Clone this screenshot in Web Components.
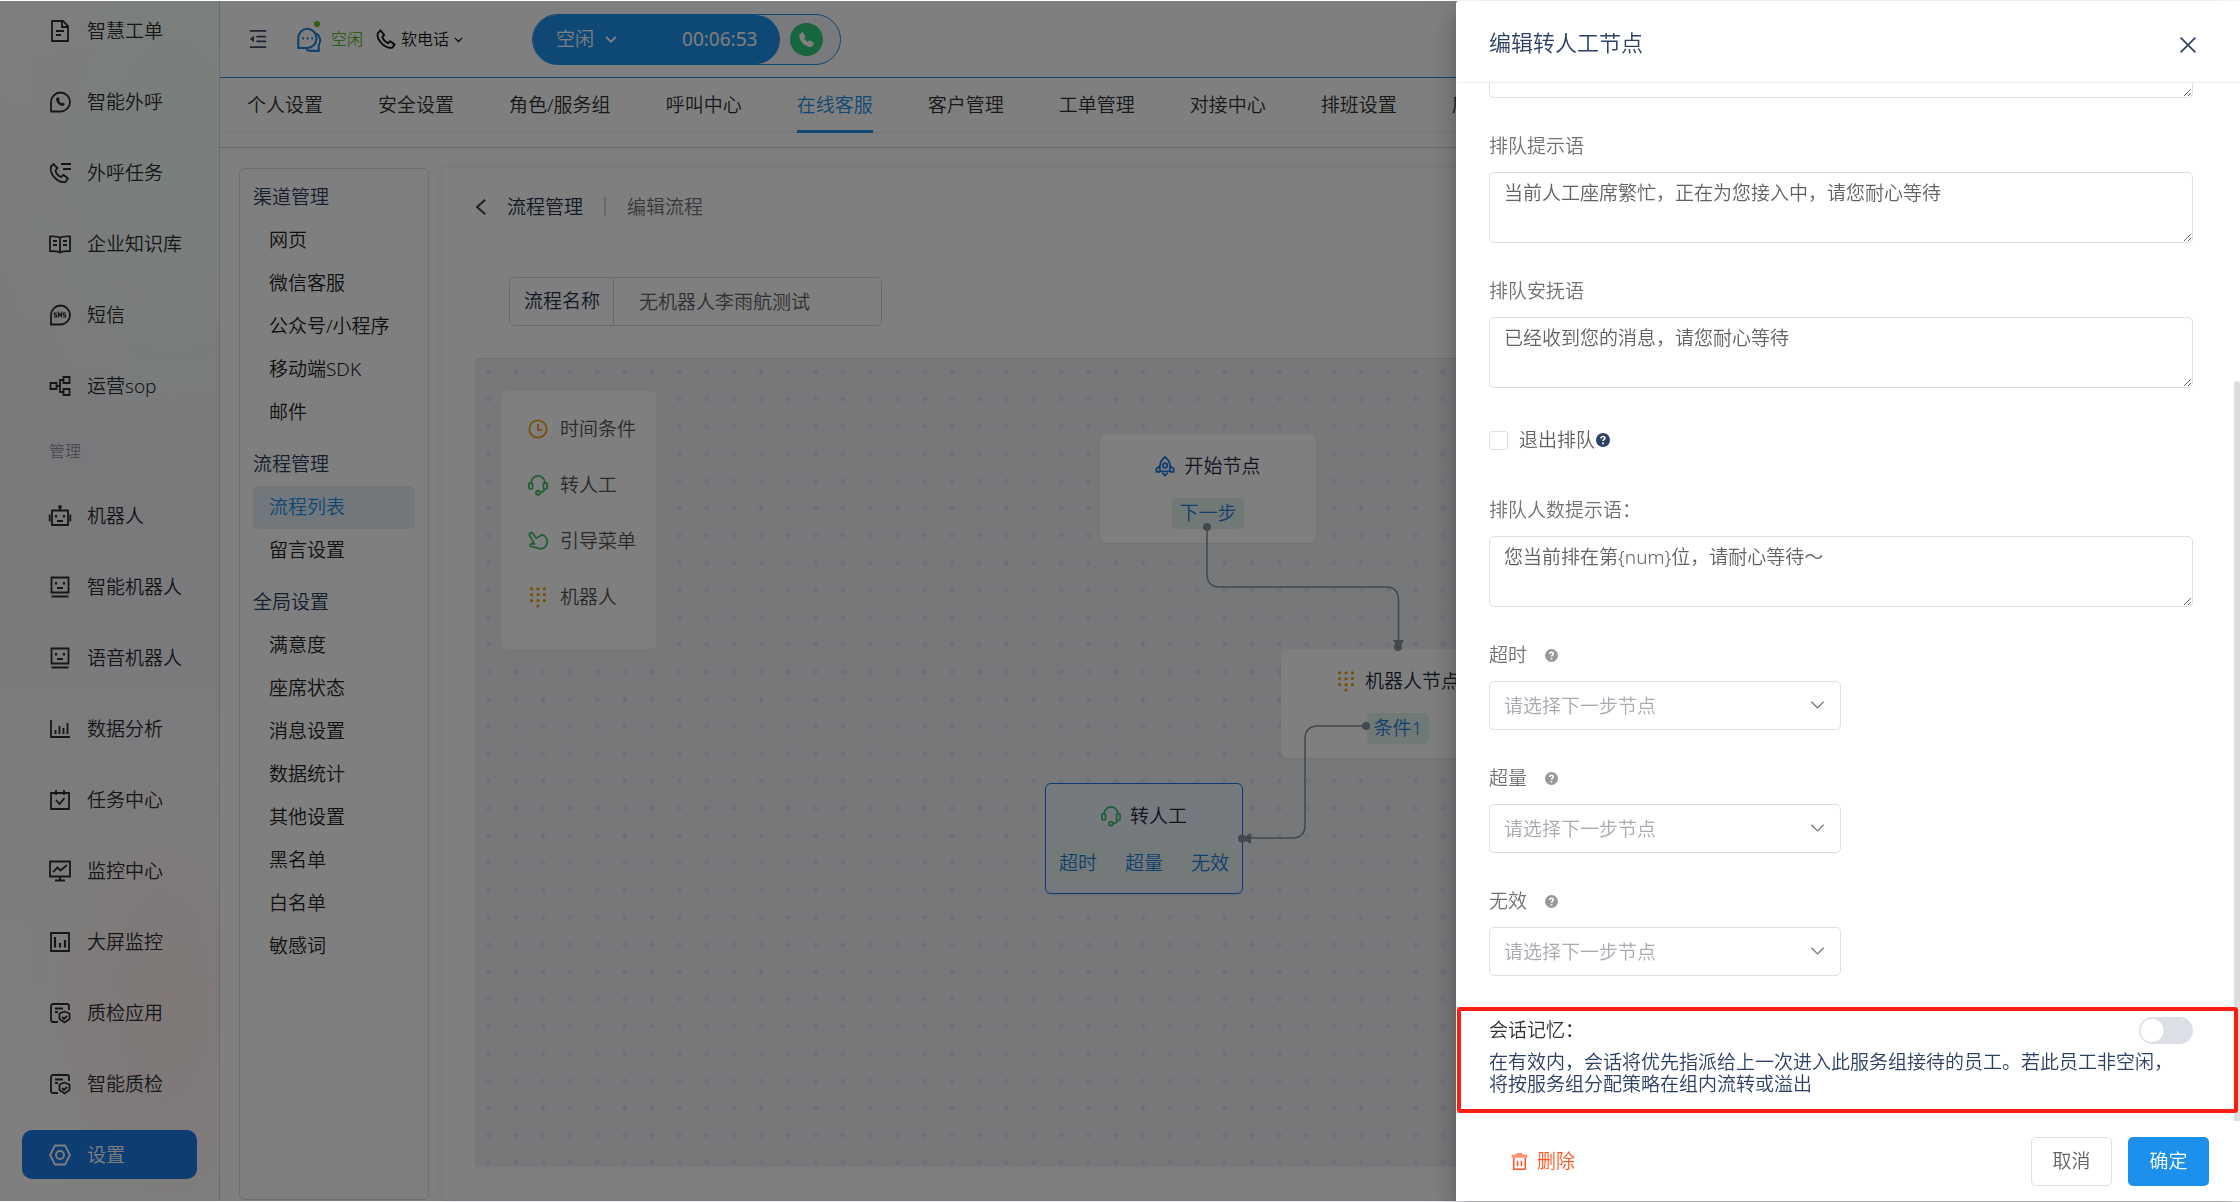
<!DOCTYPE html>
<html lang="zh-CN">
<head>
<meta charset="utf-8">
<meta name="viewport" content="width=device-width, initial-scale=1">
<title>流程管理</title>
<style>
  body {
    margin: 0;
    background: #fff;
    color: #303133;
    font: 350 19px/28px "Noto Sans", "Noto Sans CJK SC", sans-serif;
    overflow: hidden;
  }
</style>
</head>
<body>

<app-shell>
  <side-nav slot="side"></side-nav>
  <top-bar slot="top"></top-bar>
  <tab-bar slot="tabs"></tab-bar>
  <settings-menu slot="menu"></settings-menu>
  <flow-editor slot="main"></flow-editor>
</app-shell>

<edit-drawer heading="编辑转人工节点">
  <text-field></text-field>
  <text-field label="排队提示语" value="当前人工座席繁忙，正在为您接入中，请您耐心等待"></text-field>
  <text-field label="排队安抚语" value="已经收到您的消息，请您耐心等待"></text-field>
  <check-field label="退出排队"></check-field>
  <text-field label="排队人数提示语：" value="您当前排在第{num}位，请耐心等待～"></text-field>
  <select-field label="超时" placeholder="请选择下一步节点"></select-field>
  <select-field label="超量" placeholder="请选择下一步节点"></select-field>
  <select-field label="无效" placeholder="请选择下一步节点"></select-field>
  <memory-switch slot="note" label="会话记忆：">在有效内，会话将优先指派给上一次进入此服务组接待的员工。若此员工非空闲，将按服务组分配策略在组内流转或溢出</memory-switch>
</edit-drawer>

<script>
/* === ICONS === */

const ICONS = {
  doc: '<path d="M3 1h11l5 5v15H3zM13 1v6h6M7 11h8M7 15h5"/>',
  call: '<path d="M2 20.5V11a9.5 9.5 0 1 1 9.500 9.500z"/><path d="M7 7.500c0 4 3.500 7.500 7.500 7.500l1.500-2-2.500-1.500-1.200.8c-1-.5-1.800-1.400-2.300-2.500l.9-1L9.500 6z" fill="currentColor" stroke="none"/>',
  task: '<path d="M2 4.500 4.500 2 8.500 6 6.500 8.500c.5 3 3 5.500 5.500 6.500l2.500-2 4.500 3.500-2.500 3.500C10 21.500 0 13 2 4.500zM12 2h10M14 7h8"/>',
  book: '<path d="M11 5C9 3 5 3.500 1 3.500V18c4 0 8 0 10 1.500 2-1.500 6-1.500 10-1.500V3.500c-4 0-8-.5-10 1.500zM11 5v14M4 8h4M4 12h4M14 8h4M14 12h4"/>',
  sms: '<path d="M2 20.500V11a9.500 9.500 0 1 1 9.500 9.500z"/><path d="M8 9H5.500v2H7.500v2H5M9.500 13.500V9l1.500 2.500L12.500 9v4.500M17 9h-2.500v2h2v2H14" stroke-width="1.200"/>',
  sop: '<path d="M1.500 8h6v6h-6zM14.500 2h6v6h-6zM14.500 14h6v6h-6zM7.500 11H11M14.500 5H11v12h3.500"/>',
  bot: '<path d="M3 5.500h16V20H3zM11 5V1.500M.7 9.500v7M21.300 9.500v7M8 16h6"/><path d="M7 10v2.500M15 10v2.500" stroke-width="2.200"/><circle cx="11" cy="2" r="1" fill="currentColor"/>',
  face: '<path d="M2.500 1.500h17v15h-17zM2.500 20.500h17M8 12h6"/><path d="M7 6v2.500M15 6v2.500" stroke-width="2.200"/>',
  chart: '<path d="M2 2v17h19M6.500 12v4M10.500 8v8M14.500 10v6M18.500 5v11"/>',
  todo: '<path d="M2 4h18v16H2zM7 1v5M15 1v5M7 11l3.500 4 5-6"/>',
  monitor: '<path d="M1 1.500h20v15H1zM11 17v3.500M6 20.500h10M4 12l4.500-4.500 3 3L18 5"/>',
  screen: '<path d="M2 2h18v18H2z"/><path d="M6 6v10.500M11 12v4.500M16 9v7.500" stroke-width="2.200"/>',
  audit: '<path d="M9 20H4a2 2 0 0 1-2-2V4a2 2 0 0 1 2-2h14a2 2 0 0 1 2 2v4M6 6.500h8M6 10h3"/><path d="M15.500 9.500 20.500 11.500V17l-5 3.500-5-3.500v-5.500zM13 15l2 2 3-3"/>',
  gear: '<path d="M6 1.500h10L21 11l-5 9.500H6L1 11z"/><circle cx="11" cy="11" r="4"/>',
  fold: '<path d="M1 1h20M9 8h12M9 14h12M1 21h20" stroke-width="2.200"/><path d="M1 11 6 7v8z" fill="currentColor" stroke="none"/>',
  chat: '<path d="M2 18.500V9.500a8 8.500 0 1 1 8 9z"/><path d="M18 5.500c4 3 4 7.500 2 10.500v5h-7c-1.500 0-3-.5-4-1.500"/><path d="M5.500 10h1.500M9.500 10H11M13.500 10H15" stroke-width="2"/>',
  phone: '<path d="M2 4.500 5 1.500l4 5-2 2.500c1 2.500 3.500 5.500 6.500 6.500l2-2 5 3.500-2.500 3.500C10.500 22 0 12.500 2 4.500z"/>',
  phoneFill: '<path d="M2 4.500 5.500 1l4.500 6-2 2.500c1 2 2.500 3.500 4.500 4.500l2.500-2 6 4-3 4.500C10.500 22 0 12.500 2 4.500z" fill="currentColor" stroke="none"/>',
  down: '<path d="M2 7l9 9 9-9"/>',
  left: '<path d="M14 1 3 11l11 10"/>',
  close: '<path d="M2 2l18 18M20 2 2 20"/>',
  clock: '<circle cx="11" cy="11" r="9.500"/><path d="M11 5.500V12h5"/>',
  headset: '<path d="M3.500 9C3.500 4 7 1 11 1s7.500 3 7.500 8M18.500 15.500c-1 2.500-3 3.500-5.300 4"/><rect x="1" y="8.500" width="4" height="7" rx="2"/><rect x="17" y="8.500" width="4" height="7" rx="2"/><circle cx="11" cy="19.500" r="2.200"/>',
  hand: '<path d="M1.500 4.500C1 2 4 .8 5.500 3L9 8l6.500-4c4 1 6 5 5.500 9-.5 4-4 7-8 6.500l-10-2.500c-1.500-1-.5-3 1-3h3z"/>',
  keypad: '<path d="M4 2h.01M11 2h.01M18 2h.01M4 8.500h.01M11 8.500h.01M18 8.500h.01M4 15h.01M11 15h.01M18 15h.01M11 21h.01" stroke-width="3.600" stroke-linecap="round"/>',
  rocket: '<path d="M11 1C7 4 5.500 7.500 5.500 11v6h11v-6C16.500 7.500 15 4 11 1zM5.500 11 1.500 14v3.500h4M16.500 11l4 3v3.500h-4M8 18.500l3 3 3-3"/><circle cx="11" cy="10.500" r="2.500"/>',
  help: '<circle cx="11" cy="11" r="11" fill="currentColor" stroke="none"/><path d="M8 8.500c0-4 6-4 6-.3 0 2-3 2.300-3 4.500" stroke="#fff" stroke-width="2.600"/><path d="M11 15v2.600" stroke="#fff" stroke-width="2.800"/>',
  trash: '<path d="M1 4h20M7 2h8" stroke-width="4" stroke-opacity=".65"/><path d="M3.500 6v15h15V6M8.500 10v7M13.500 10v7"/>'
};

class UiIcon extends HTMLElement {
  connectedCallback() {
    const width = this.getAttribute("stroke") || "1.800";
    this.attachShadow({ mode: "open" }).innerHTML = `
      <style>
        :host { display: inline-flex; flex: none; width: 22px; height: 22px; }
        svg { width: 100%; height: 100%; overflow: visible; }
      </style>
      <svg viewBox="0 0 22 22" fill="none" stroke="currentColor" stroke-width="${width}" aria-hidden="true">${ICONS[this.getAttribute("name")]}</svg>
    `;
  }
}

/* === LAYOUT === */

class AppShell extends HTMLElement {
  constructor() {
    super();
    this.attachShadow({ mode: "open" }).innerHTML = `
      <style>
        :host {
          display: grid;
          grid-template-columns: 220px minmax(0, 1fr);
          box-sizing: border-box;
          height: 100vh;
          padding: 1px 0;
        }
        .page { display: flex; flex-direction: column; min-width: 0; min-height: 0; }
        .content {
          flex: 1;
          display: grid;
          grid-template-columns: 190px minmax(0, 1fr);
          gap: 14px;
          min-height: 0;
          padding: 20px 19px 1px;
          margin-top: 14px;
          border-top: 1px solid #d4d6da;
        }
      </style>
      <slot name="side"></slot>
      <div class="page">
        <slot name="top"></slot>
        <slot name="tabs"></slot>
        <div class="content">
          <slot name="menu"></slot>
          <slot name="main"></slot>
        </div>
      </div>
    `;
  }
}

class SideNav extends HTMLElement {
  constructor() {
    super();
    const link = ([icon, text, on]) => `<a href="#" class="${on ? "on" : ""}"><ui-icon name="${icon}"></ui-icon>${text}</a>`;
    const work = [["doc", "智慧工单"], ["call", "智能外呼"], ["task", "外呼任务"], ["book", "企业知识库"], ["sms", "短信"], ["sop", "运营sop"]];
    const manage = [["bot", "机器人"], ["face", "智能机器人"], ["face", "语音机器人"], ["chart", "数据分析"], ["todo", "任务中心"],
      ["monitor", "监控中心"], ["screen", "大屏监控"], ["audit", "质检应用"], ["audit", "智能质检"], ["gear", "设置", true]];

    this.attachShadow({ mode: "open" }).innerHTML = `
      <style>
        :host {
          display: block;
          box-sizing: border-box;
          padding: 5px 22px 0;
          overflow: hidden;
          border-right: 1px solid #d2d4da;
          background:
            radial-gradient(ellipse 190px 330px at 80% 12%, #f2fff7, transparent),
            radial-gradient(ellipse 150px 300px at 75% 84%, #fff1ef, transparent),
            linear-gradient(#fcfdfd, #f3f3f9 38%, #f7f8fd 62%, #fdfcfc 82%, #fff);
        }
        nav { display: flex; flex-direction: column; gap: 22px; }
        a {
          display: flex;
          align-items: center;
          gap: 16px;
          height: 49px;
          padding-left: 27px;
          border-radius: 10px;
          color: #2c2d30;
          text-decoration: none;
        }
        .on { background: #1c7be6; color: #fff; }
        h2 { margin: 28px 27px 27px; font-size: 16px; font-weight: inherit; line-height: 26px; color: #96979f; }
      </style>
      <nav>${work.map(link).join("")}</nav>
      <h2>管理</h2>
      <nav>${manage.map(link).join("")}</nav>
    `;
  }
}

class TopBar extends HTMLElement {
  constructor() {
    super();
    this.attachShadow({ mode: "open" }).innerHTML = `
      <style>
        :host {
          display: flex;
          align-items: center;
          height: 76px;
          padding: 0 28px;
          border-bottom: 1px solid #1c90ea;
          font-size: 16px;
        }
        button {
          display: flex;
          align-items: center;
          padding: 0;
          border: 0;
          background: none;
          color: inherit;
          font: inherit;
          cursor: pointer;
        }
        .fold { color: #3c4a66; }
        .fold ui-icon { width: 20px; height: 18px; }
        .chat { position: relative; gap: 10px; margin-left: 28px; color: #5fb62f; }
        .chat ui-icon { width: 25px; height: 25px; color: #1c80dc; }
        .chat::after {
          content: "";
          position: absolute;
          left: 18px;
          top: -4px;
          width: 6px;
          height: 6px;
          border-radius: 50%;
          background: #5fb62f;
        }
        .soft { gap: 5px; margin-left: 13px; color: #111; }
        .soft ui-icon { width: 20px; height: 20px; }
        .soft .arrow { width: 9px; height: 9px; }
        .status {
          display: flex;
          align-items: center;
          box-sizing: border-box;
          height: 51px;
          margin-left: 69px;
          padding-right: 17px;
          border: 1px solid #1c90ea;
          border-radius: 26px;
          background: #f0f5fd;
          font-size: 19px;
        }
        .state {
          gap: 11px;
          height: 49px;
          padding: 0 23px;
          border-radius: 25px;
          background: #1c90ea;
          color: #fff;
        }
        .state ui-icon { width: 12px; height: 12px; }
        time { margin-left: 54px; font-weight: 400; }
        .dial {
          justify-content: center;
          width: 33px;
          height: 33px;
          margin-left: 10px;
          border-radius: 50%;
          background: #2fcc7a;
          color: #fff;
        }
        .dial ui-icon { width: 17px; height: 17px; }
      </style>
      <button class="fold" aria-label="收起"><ui-icon name="fold"></ui-icon></button>
      <button class="chat"><ui-icon name="chat" stroke="1.800"></ui-icon>空闲</button>
      <button class="soft"><ui-icon name="phone" stroke="2"></ui-icon>软电话<ui-icon class="arrow" name="down" stroke="3"></ui-icon></button>
      <div class="status">
        <button class="state">空闲<ui-icon name="down" stroke="3.500"></ui-icon><time>00:06:53</time></button>
        <button class="dial" aria-label="拨号"><ui-icon name="phoneFill"></ui-icon></button>
      </div>
    `;
  }
}

class TabBar extends HTMLElement {
  constructor() {
    super();
    const tabs = ["个人设置", "安全设置", "角色/服务组", "呼叫中心", "在线客服", "客户管理", "工单管理", "对接中心", "排班设置", "质检"];
    this.attachShadow({ mode: "open" }).innerHTML = `
      <style>
        :host { display: block; padding: 0 27px; border-bottom: 1px solid #eceef2; }
        nav { display: flex; gap: 55px; height: 54px; }
        a { box-sizing: border-box; height: 55px; line-height: 55px; color: #303133; text-decoration: none; white-space: nowrap; }
        .on { color: #1c90ea; border-bottom: 3px solid #1c90ea; }
      </style>
      <nav>${tabs.map(t => `<a href="#" class="${t === "在线客服" ? "on" : ""}">${t}</a>`).join("")}</nav>
    `;
  }
}

class SettingsMenu extends HTMLElement {
  constructor() {
    super();
    const groups = {
      "渠道管理": ["网页", "微信客服", "公众号/小程序", "移动端SDK", "邮件"],
      "流程管理": ["流程列表", "留言设置"],
      "全局设置": ["满意度", "座席状态", "消息设置", "数据统计", "其他设置", "黑名单", "白名单", "敏感词"]
    };
    this.attachShadow({ mode: "open" }).innerHTML = `
      <style>
        :host {
          display: flex;
          flex-direction: column;
          gap: 9px;
          box-sizing: border-box;
          padding: 7px 13px;
          border: 1px solid #dcdde0;
          border-radius: 5px;
          line-height: 43px;
        }
        h3 { margin: 0; font-size: 19px; font-weight: inherit; color: #2b3c5c; }
        a { display: block; padding-left: 16px; border-radius: 5px; color: #222; text-decoration: none; }
        .on { background: #e4eff8; color: #1c90ea; }
      </style>
      ${Object.entries(groups).map(([title, items]) => `
        <section>
          <h3>${title}</h3>
          ${items.map(t => `<a href="#" class="${t === "流程列表" ? "on" : ""}">${t}</a>`).join("")}
        </section>`).join("")}
    `;
  }
}

/* === FLOW EDITOR === */

class FlowEditor extends HTMLElement {
  constructor() {
    super();
    this.attachShadow({ mode: "open" }).innerHTML = `
      <style>
        :host {
          display: flex;
          flex-direction: column;
          min-width: 0;
          padding: 0 32px 33px;
          border-radius: 5px;
          background: #fff;
          box-shadow: 0 0 10px rgba(60, 70, 140, .14);
        }
        header { display: flex; align-items: center; height: 77px; }
        header a { display: flex; align-items: center; gap: 16px; color: #25314a; text-decoration: none; }
        header ui-icon { width: 16px; height: 16px; color: #444; }
        header i { width: 2px; height: 19px; margin: 0 21px; background: #cfd1d6; }
        header span { color: #707276; }
        .name {
          display: flex;
          width: 373px;
          box-sizing: border-box;
          height: 49px;
          margin: 32px 34px;
          border: 1px solid #d3d6df;
          border-radius: 5px;
        }
        label { padding: 0 13px 0 14px; border-right: 1px solid #d3d6df; line-height: 47px; color: #25314a; white-space: nowrap; }
        input {
          flex: 1;
          min-width: 0;
          padding: 0 25px;
          border: 0;
          outline: 0;
          background: none;
          color: #606266;
          font: inherit;
        }
        .canvas { position: relative; flex: 1; overflow: hidden; border-top: 1px solid #dfe1e6; background: #eff1f5; }
        svg { position: absolute; inset: 0; width: 100%; height: 100%; }
        .palette {
          position: absolute;
          left: 27px;
          top: 32px;
          display: flex;
          flex-direction: column;
          gap: 28px;
          box-sizing: border-box;
          width: 154px;
          padding: 24px 26px 38px;
          border-radius: 6px;
          background: #fff;
          color: #54565a;
        }
        .palette div { display: flex; align-items: center; gap: 12px; white-space: nowrap; }
        .palette ui-icon { width: 20px; height: 20px; }
        .orange { color: #eba216; }
        .green { color: #43c06c; }
        flow-node { position: absolute; }
      </style>
      <header>
        <a href="#"><ui-icon name="left" stroke="3"></ui-icon>流程管理</a>
        <i></i>
        <span>编辑流程</span>
      </header>
      <div class="name">
        <label for="name">流程名称</label>
        <input id="name" value="无机器人李雨航测试">
      </div>
      <div class="canvas">
        <svg aria-hidden="true">
          <pattern id="dots" width="27.270" height="27.270" patternUnits="userSpaceOnUse">
            <path d="M13.500 9.800 16.700 13l-3.200 3.200L10.300 13z" fill="#dfe1ec"/>
          </pattern>
          <rect width="100%" height="100%" fill="url(#dots)"/>
        </svg>
        <div class="palette">
          <div><ui-icon class="orange" name="clock" stroke="2"></ui-icon>时间条件</div>
          <div><ui-icon class="green" name="headset" stroke="2"></ui-icon>转人工</div>
          <div><ui-icon class="green" name="hand" stroke="2"></ui-icon>引导菜单</div>
          <div><ui-icon class="orange" name="keypad"></ui-icon>机器人</div>
        </div>
        <flow-node icon="rocket" tint="#1c80dc" heading="开始节点" ports="下一步" style="left: 625px; top: 75px; width: 216px"></flow-node>
        <flow-node icon="keypad" tint="#eba216" heading="机器人节点" ports="条件1" style="left: 806px; top: 290px; width: 234px"></flow-node>
        <flow-node selected icon="headset" tint="#43c06c" heading="转人工" ports="超时,超量,无效" style="left: 570px; top: 424px; width: 198px"></flow-node>
        <svg aria-hidden="true" fill="#84909f">
          <g fill="none" stroke="#84909f" stroke-width="1.500">
            <path d="M732 168v47q0 13 13 13h165.500q13 0 13 13v40"/>
            <path d="M891 367h-48q-13 0-13 13v86q0 13-13 13h-42"/>
          </g>
          <path d="M918 281h11l-5.500 9zM776 474v11l-9-5.500z"/>
          <circle cx="732" cy="168" r="4"/>
          <circle cx="923" cy="288" r="4"/>
          <circle cx="891" cy="367" r="4"/>
          <circle cx="767" cy="479.500" r="4"/>
        </svg>
      </div>
    `;
  }
}

class FlowNode extends HTMLElement {
  connectedCallback() {
    const ports = this.getAttribute("ports").split(",");
    this.attachShadow({ mode: "open" }).innerHTML = `
      <style>
        :host {
          display: block;
          box-sizing: border-box;
          padding: 17px 0 14px;
          border-radius: 6px;
          background: #fff;
          box-shadow: 0 1px 3px rgba(0, 0, 0, .08);
          text-align: center;
        }
        :host([selected]) { border: 1px solid #1c72f0; background: #edf3fd; }
        .title { display: flex; justify-content: center; align-items: center; gap: 9px; line-height: 30px; color: #20283a; }
        .title ui-icon { width: 20px; height: 20px; color: ${this.getAttribute("tint")}; }
        .ports { display: flex; justify-content: center; gap: 12px; margin-top: 17px; }
        .ports span { padding: 0 7px; border-radius: 5px; background: #e2f3ee; color: #1c80dc; line-height: 31px; }
        :host([selected]) .ports { gap: 14px; }
        :host([selected]) .ports span { background: #e8f4f0; }
      </style>
      <div class="title"><ui-icon name="${this.getAttribute("icon")}" stroke="2"></ui-icon>${this.getAttribute("heading")}</div>
      <div class="ports">${ports.map(p => `<span>${p}</span>`).join("")}</div>
    `;
  }
}

/* === FORM FIELDS === */

class TextField extends HTMLElement {
  connectedCallback() {
    const label = this.getAttribute("label");
    this.attachShadow({ mode: "open" }).innerHTML = `
      <style>
        :host { display: flex; flex-direction: column; gap: 8px; }
        label { line-height: 36px; color: #707276; }
        textarea {
          box-sizing: border-box;
          width: 100%;
          height: 71px;
          padding: 7px 14px;
          border: 1px solid #dcdfe6;
          border-radius: 5px;
          outline: 0;
          color: #606266;
          font: inherit;
          line-height: 26px;
        }
      </style>
      ${label ? `<label for="text">${label}</label>` : ""}
      <textarea id="text">${this.getAttribute("value") || ""}</textarea>
    `;
  }
}

class SelectField extends HTMLElement {
  connectedCallback() {
    this.attachShadow({ mode: "open" }).innerHTML = `
      <style>
        :host { display: flex; flex-direction: column; gap: 8px; }
        .head { display: flex; align-items: center; gap: 18px; line-height: 36px; color: #707276; }
        .head ui-icon { width: 13px; height: 13px; color: #999; }
        .box { position: relative; width: 50%; }
        select {
          appearance: none;
          box-sizing: border-box;
          width: 100%;
          height: 49px;
          padding: 0 14px;
          border: 1px solid #dcdfe6;
          border-radius: 5px;
          background: #fff;
          color: #a8abb2;
          font: inherit;
        }
        .box ui-icon { position: absolute; right: 16px; top: 16px; width: 15px; height: 15px; color: #707276; pointer-events: none; }
      </style>
      <div class="head"><label for="next">${this.getAttribute("label")}</label><ui-icon name="help"></ui-icon></div>
      <div class="box">
        <select id="next"><option>${this.getAttribute("placeholder")}</option></select>
        <ui-icon name="down"></ui-icon>
      </div>
    `;
  }
}

class CheckField extends HTMLElement {
  connectedCallback() {
    this.attachShadow({ mode: "open" }).innerHTML = `
      <style>
        :host { display: flex; align-items: center; height: 44px; }
        input {
          appearance: none;
          box-sizing: border-box;
          width: 19px;
          height: 19px;
          margin: 0 11px 0 0;
          border: 1px solid #dcdfe6;
          border-radius: 3px;
          background: #fff;
        }
        label { color: #606266; }
        ui-icon { width: 14px; height: 14px; margin-left: 1px; color: #2c4066; }
      </style>
      <input type="checkbox" id="check">
      <label for="check">${this.getAttribute("label")}</label>
      <ui-icon name="help"></ui-icon>
    `;
  }
}

class MemorySwitch extends HTMLElement {
  connectedCallback() {
    this.attachShadow({ mode: "open" }).innerHTML = `
      <style>
        :host {
          display: block;
          flex: none;
          box-sizing: border-box;
          padding: 4px 41px 14px 28px;
          border: 4px solid #ff1d12;
          border-radius: 3px;
          color: #2c4066;
        }
        .row { display: flex; justify-content: space-between; align-items: center; }
        label { line-height: 30px; color: #303133; }
        input {
          appearance: none;
          width: 54px;
          height: 27px;
          margin: 0;
          border-radius: 14px;
          background: radial-gradient(circle at 13px 50%, #fff 11px, transparent 12px) #dcdfe6;
        }
        p { margin: 6px 10px 0 0; line-height: 22px; }
      </style>
      <div class="row">
        <label for="memory">${this.getAttribute("label")}</label>
        <input type="checkbox" role="switch" id="memory">
      </div>
      <p><slot></slot></p>
    `;
  }
}

/* === DRAWER === */

class EditDrawer extends HTMLElement {
  connectedCallback() {
    this.attachShadow({ mode: "open" }).innerHTML = `
      <style>
        :host {
          position: fixed;
          inset: 1px 0;
          display: flex;
          justify-content: flex-end;
          background: rgba(0, 0, 0, .5);
        }
        .panel {
          position: relative;
          display: flex;
          flex-direction: column;
          box-sizing: border-box;
          width: 35%;
          padding-left: 1px;
          background: #fff;
          border-radius: 3px 0 0 0;
          box-shadow: 0 8px 10px -5px rgba(0, 0, 0, .2), 0 16px 24px 2px rgba(0, 0, 0, .14), 0 6px 30px 5px rgba(0, 0, 0, .12);
        }
        header {
          display: flex;
          justify-content: space-between;
          align-items: center;
          height: 81px;
          padding: 0 43px 0 32px;
          border-bottom: 1px solid #e8eef5;
          color: #2c4066;
        }
        h1 { margin: 0; font-size: 22px; font-weight: inherit; }
        button { display: flex; align-items: center; justify-content: center; padding: 0; border: 0; background: none; color: inherit; font: inherit; cursor: pointer; }
        .close { margin-top: 6px; }
        .close ui-icon { width: 18px; height: 18px; }
        /* the body rests at the end of its content */
        .body {
          position: relative;
          flex: 1;
          display: flex;
          flex-direction: column;
          justify-content: flex-end;
          gap: 31px;
          min-height: 0;
          padding: 0 2px 8px 0;
          overflow: hidden;
        }
        .fields { flex: none; display: flex; flex-direction: column; gap: 30px; padding: 0 45px 0 32px; }
        .thumb { position: absolute; right: 0; top: 380px; bottom: 80px; width: 6px; border-radius: 3px 3px 0 0; background: #dedede; }
        footer { display: flex; align-items: center; gap: 16px; height: 80px; padding: 0 31px 0 54px; }
        footer button { box-sizing: border-box; width: 81px; height: 49px; border-radius: 5px; }
        footer .delete { gap: 9px; width: auto; margin-right: auto; color: #ff5722; }
        .delete ui-icon { width: 17px; height: 17px; }
        .cancel { border: 1px solid #dcdfe6; color: #606266; }
        .ok { background: #1c90ea; color: #fff; }
      </style>
      <section class="panel" role="dialog" aria-labelledby="title">
        <header>
          <h1 id="title">${this.getAttribute("heading")}</h1>
          <button class="close" aria-label="关闭"><ui-icon name="close" stroke="2"></ui-icon></button>
        </header>
        <div class="thumb"></div>
        <div class="body">
          <div class="fields"><slot></slot></div>
          <slot name="note"></slot>
        </div>
        <footer>
          <button class="delete"><ui-icon name="trash" stroke="2"></ui-icon>删除</button>
          <button class="cancel">取消</button>
          <button class="ok">确定</button>
        </footer>
      </section>
    `;
  }
}

customElements.define("ui-icon", UiIcon);
customElements.define("app-shell", AppShell);
customElements.define("side-nav", SideNav);
customElements.define("top-bar", TopBar);
customElements.define("tab-bar", TabBar);
customElements.define("settings-menu", SettingsMenu);
customElements.define("flow-node", FlowNode);
customElements.define("flow-editor", FlowEditor);
customElements.define("text-field", TextField);
customElements.define("select-field", SelectField);
customElements.define("check-field", CheckField);
customElements.define("memory-switch", MemorySwitch);
customElements.define("edit-drawer", EditDrawer);
</script>
</body>
</html>
